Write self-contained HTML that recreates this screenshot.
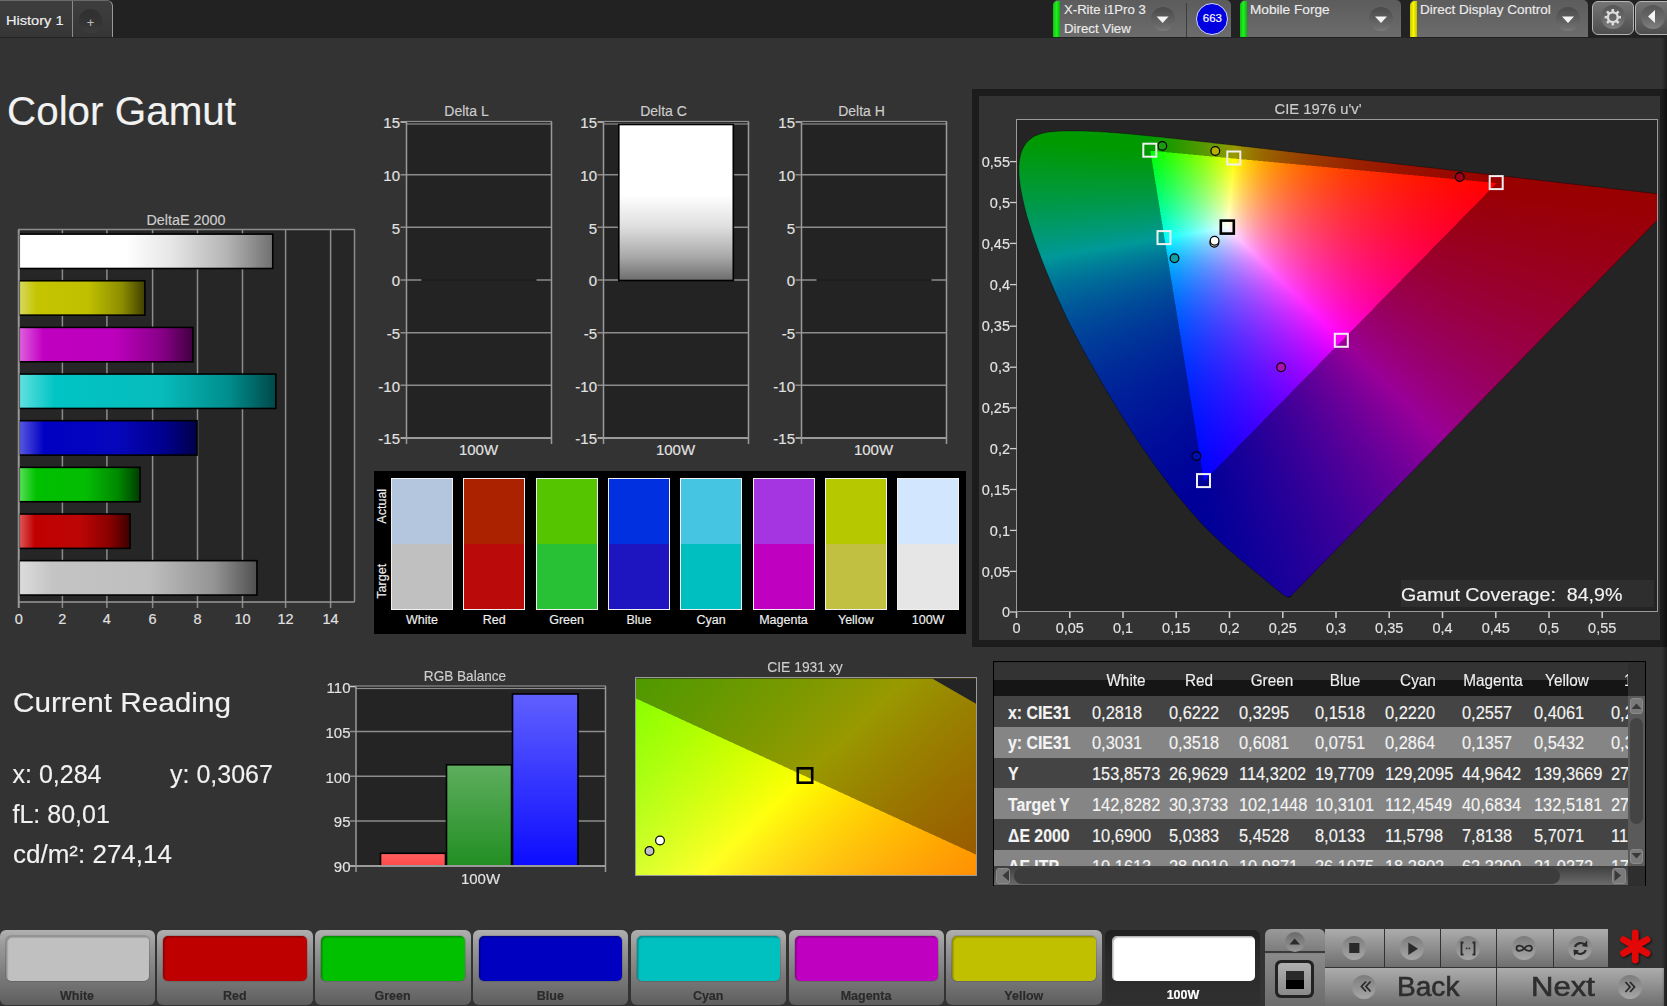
<!DOCTYPE html>
<html><head><meta charset="utf-8">
<style>
*{margin:0;padding:0;box-sizing:border-box}
html,body{width:1667px;height:1006px;overflow:hidden;background:#333333;font-family:"Liberation Sans",sans-serif;color:#ddd}
.a{position:absolute}
.t{position:absolute;white-space:nowrap;line-height:1;-webkit-text-stroke:0.15px currentColor}
svg.s{position:absolute;left:0;top:0;width:1667px;height:1006px;overflow:visible}
</style></head><body>

<div class="a" style="left:0.0px;top:0.0px;width:1667.0px;height:38.0px;background:#222"></div>
<div class="a" style="left:0.0px;top:0.0px;width:113.0px;height:37.0px;background:linear-gradient(#3e3e3e,#363636);border-top:1px solid #6a6a6a;border-right:1.5px solid #9a9a9a;border-top-right-radius:6px"></div>
<div class="a" style="left:71.5px;top:1.0px;width:1.2px;height:36.0px;background:#8a8a8a"></div>
<div class="t" style="left:6.0px;top:13.5px;font-size:13.5px;color:#f0f0f0;font-weight:normal;transform:scaleX(1.08);transform-origin:0 0;">History 1</div>
<div class="a" style="left:78.8px;top:9.3px;width:23.5px;height:23.5px;border-radius:50%;background:linear-gradient(#303030,#343434 60%,#3c3c3c)"></div>
<div class="t" style="left:-209.5px;width:600px;text-align:center;top:15.8px;font-size:13px;color:#b8b8b8;font-weight:normal;">+</div>
<div class="a" style="left:1053.0px;top:0.0px;width:178.0px;height:37.0px;background:linear-gradient(#5c5c5c,#6c6c6c);border-top-left-radius:5px;border-top-right-radius:5px"></div>
<div class="a" style="left:1053.0px;top:1.0px;width:7.0px;height:36.0px;background:linear-gradient(90deg,#10c010,#20f020 50%,#10b010);border-top-left-radius:5px"></div>
<div class="a" style="left:1185.5px;top:3.0px;width:1.5px;height:34.0px;background:#3c3c3c"></div>
<div class="t" style="left:1064.0px;top:3.0px;font-size:13px;color:#ececec;font-weight:normal;transform:scaleX(1.01);transform-origin:0 0;">X-Rite i1Pro 3</div>
<div class="t" style="left:1064.0px;top:22.0px;font-size:13px;color:#ececec;font-weight:normal;transform:scaleX(1.02);transform-origin:0 0;">Direct View</div>
<div class="a" style="left:1150.6px;top:6.6px;width:24.0px;height:24.0px;border-radius:50%;background:linear-gradient(#4a4a4a,#6a6a6a 80%,#7a7a7a)"></div><svg class="s"><polygon points="1156.6,16.6 1168.6,16.6 1162.6,23.1" fill="#f4f4f4"/></svg>
<div class="a" style="left:1196.4px;top:2.6px;width:32.0px;height:32.0px;border-radius:50%;background:#0000e0;border:1.5px solid #d8d8ff"></div>
<div class="t" style="left:912.4px;width:600px;text-align:center;top:13.2px;font-size:11.5px;color:#ffffff;font-weight:normal;">663</div>
<div class="a" style="left:1239.5px;top:0.0px;width:161.5px;height:37.0px;background:linear-gradient(#5c5c5c,#6c6c6c);border-top-left-radius:5px;border-top-right-radius:5px"></div>
<div class="a" style="left:1239.5px;top:1.0px;width:7.0px;height:36.0px;background:linear-gradient(90deg,#10c010,#20f020 50%,#10b010);border-top-left-radius:5px"></div>
<div class="t" style="left:1250.0px;top:3.0px;font-size:13px;color:#ececec;font-weight:normal;transform:scaleX(1.05);transform-origin:0 0;">Mobile Forge</div>
<div class="a" style="left:1369.0px;top:6.6px;width:24.0px;height:24.0px;border-radius:50%;background:linear-gradient(#4a4a4a,#6a6a6a 80%,#7a7a7a)"></div><svg class="s"><polygon points="1375,16.6 1387,16.6 1381,23.1" fill="#f4f4f4"/></svg>
<div class="a" style="left:1410.0px;top:0.0px;width:178.0px;height:37.0px;background:linear-gradient(#5c5c5c,#6c6c6c);border-top-left-radius:5px;border-top-right-radius:5px"></div>
<div class="a" style="left:1410.0px;top:1.0px;width:7.0px;height:36.0px;background:linear-gradient(90deg,#c8c800,#f8f800 50%,#c0c000);border-top-left-radius:5px"></div>
<div class="t" style="left:1420.0px;top:3.0px;font-size:13px;color:#ececec;font-weight:normal;transform:scaleX(1.04);transform-origin:0 0;">Direct Display Control</div>
<div class="a" style="left:1556.0px;top:6.6px;width:24.0px;height:24.0px;border-radius:50%;background:linear-gradient(#4a4a4a,#6a6a6a 80%,#7a7a7a)"></div><svg class="s"><polygon points="1562,16.6 1574,16.6 1568,23.1" fill="#f4f4f4"/></svg>
<div class="a" style="left:1592.0px;top:0.5px;width:42.0px;height:34.5px;background:linear-gradient(#747474,#4e4e4e);border:1.5px solid #b4b4b4;border-radius:6px"></div>
<div class="a" style="left:1600.8px;top:5.2px;width:24.0px;height:24.0px;border-radius:50%;background:linear-gradient(#555,#6a6a6a 60%,#808080)"></div>
<svg class="s"><rect x="1611.5" y="9.0" width="2.6" height="3.4" fill="#dcdcdc" transform="rotate(0 1612.8 17.2)"/><rect x="1611.5" y="9.0" width="2.6" height="3.4" fill="#dcdcdc" transform="rotate(45 1612.8 17.2)"/><rect x="1611.5" y="9.0" width="2.6" height="3.4" fill="#dcdcdc" transform="rotate(90 1612.8 17.2)"/><rect x="1611.5" y="9.0" width="2.6" height="3.4" fill="#dcdcdc" transform="rotate(135 1612.8 17.2)"/><rect x="1611.5" y="9.0" width="2.6" height="3.4" fill="#dcdcdc" transform="rotate(180 1612.8 17.2)"/><rect x="1611.5" y="9.0" width="2.6" height="3.4" fill="#dcdcdc" transform="rotate(225 1612.8 17.2)"/><rect x="1611.5" y="9.0" width="2.6" height="3.4" fill="#dcdcdc" transform="rotate(270 1612.8 17.2)"/><rect x="1611.5" y="9.0" width="2.6" height="3.4" fill="#dcdcdc" transform="rotate(315 1612.8 17.2)"/><circle cx="1612.8" cy="17.2" r="4.9" fill="none" stroke="#dcdcdc" stroke-width="2.3"/></svg>
<div class="a" style="left:1635.0px;top:0.5px;width:40.0px;height:34.5px;background:linear-gradient(#747474,#4e4e4e);border:1.5px solid #b4b4b4;border-radius:6px"></div>
<div class="a" style="left:1640.5px;top:5.2px;width:24.0px;height:24.0px;border-radius:50%;background:linear-gradient(#555,#6a6a6a 60%,#808080)"></div>
<svg class="s"><polygon points="1648,16.6 1655,10 1655,23" fill="#f4f4f4"/></svg>
<div class="t" style="left:6.5px;top:91.2px;font-size:40px;color:#f2f2f2;font-weight:normal;transform:scaleX(1.01);transform-origin:0 0;">Color Gamut</div>
<svg class="s"><defs><linearGradient id="de_white" x1="0" y1="0" x2="1" y2="0"><stop offset="0" stop-color="#ffffff"/><stop offset="0.42" stop-color="#ffffff"/><stop offset="0.6" stop-color="#e6e6e6"/><stop offset="0.82" stop-color="#b4b4b4"/><stop offset="1" stop-color="#707070"/></linearGradient><linearGradient id="de_yellow" x1="0" y1="0" x2="1" y2="0"><stop offset="0" stop-color="#d8d860"/><stop offset="0.14" stop-color="#c4c400"/><stop offset="0.55" stop-color="#c0c000"/><stop offset="0.82" stop-color="#8c8c00"/><stop offset="1" stop-color="#404000"/></linearGradient><linearGradient id="de_magenta" x1="0" y1="0" x2="1" y2="0"><stop offset="0" stop-color="#e060e0"/><stop offset="0.14" stop-color="#c000c0"/><stop offset="0.55" stop-color="#bc00bc"/><stop offset="0.82" stop-color="#880088"/><stop offset="1" stop-color="#400040"/></linearGradient><linearGradient id="de_cyan" x1="0" y1="0" x2="1" y2="0"><stop offset="0" stop-color="#60e0e0"/><stop offset="0.14" stop-color="#00c4c4"/><stop offset="0.55" stop-color="#08bcbc"/><stop offset="0.82" stop-color="#008c8c"/><stop offset="1" stop-color="#004848"/></linearGradient><linearGradient id="de_blue" x1="0" y1="0" x2="1" y2="0"><stop offset="0" stop-color="#5858e0"/><stop offset="0.14" stop-color="#0000c4"/><stop offset="0.55" stop-color="#0606bc"/><stop offset="0.82" stop-color="#00008c"/><stop offset="1" stop-color="#000048"/></linearGradient><linearGradient id="de_green" x1="0" y1="0" x2="1" y2="0"><stop offset="0" stop-color="#58e058"/><stop offset="0.14" stop-color="#00c000"/><stop offset="0.55" stop-color="#04bc04"/><stop offset="0.82" stop-color="#008800"/><stop offset="1" stop-color="#003c00"/></linearGradient><linearGradient id="de_red" x1="0" y1="0" x2="1" y2="0"><stop offset="0" stop-color="#e05858"/><stop offset="0.14" stop-color="#c00000"/><stop offset="0.55" stop-color="#bc0606"/><stop offset="0.82" stop-color="#880000"/><stop offset="1" stop-color="#3c0000"/></linearGradient><linearGradient id="de_gray" x1="0" y1="0" x2="1" y2="0"><stop offset="0" stop-color="#dcdcdc"/><stop offset="0.14" stop-color="#c4c4c4"/><stop offset="0.55" stop-color="#bebebe"/><stop offset="0.82" stop-color="#949494"/><stop offset="1" stop-color="#505050"/></linearGradient></defs><rect x="18.5" y="229.5" width="336.0" height="372.5" fill="#262626"/><line x1="62.4" y1="229.5" x2="62.4" y2="608" stroke="#8c8c8c" stroke-width="1.5"/><line x1="106.9" y1="229.5" x2="106.9" y2="608" stroke="#8c8c8c" stroke-width="1.5"/><line x1="152.6" y1="229.5" x2="152.6" y2="608" stroke="#8c8c8c" stroke-width="1.5"/><line x1="197.5" y1="229.5" x2="197.5" y2="608" stroke="#8c8c8c" stroke-width="1.5"/><line x1="242.5" y1="229.5" x2="242.5" y2="608" stroke="#8c8c8c" stroke-width="1.5"/><line x1="285.6" y1="229.5" x2="285.6" y2="608" stroke="#8c8c8c" stroke-width="1.5"/><line x1="330.6" y1="229.5" x2="330.6" y2="608" stroke="#8c8c8c" stroke-width="1.5"/><line x1="354.5" y1="229.5" x2="354.5" y2="602" stroke="#8c8c8c" stroke-width="1.5"/><line x1="18.5" y1="229.5" x2="354.5" y2="229.5" stroke="#8c8c8c" stroke-width="1.5"/><line x1="18.5" y1="602" x2="354.5" y2="602" stroke="#9a9a9a" stroke-width="1.5"/><line x1="18.5" y1="229.5" x2="18.5" y2="608" stroke="#9a9a9a" stroke-width="1.5"/><rect x="19.25" y="234.10000000000002" width="253.5" height="34.4" fill="url(#de_white)" stroke="#000" stroke-width="1.6"/><rect x="19.25" y="280.75" width="125.6" height="34.4" fill="url(#de_yellow)" stroke="#000" stroke-width="1.6"/><rect x="19.25" y="327.40000000000003" width="173.7" height="34.4" fill="url(#de_magenta)" stroke="#000" stroke-width="1.6"/><rect x="19.25" y="374.05" width="256.6" height="34.4" fill="url(#de_cyan)" stroke="#000" stroke-width="1.6"/><rect x="19.25" y="420.7" width="177.8" height="34.4" fill="url(#de_blue)" stroke="#000" stroke-width="1.6"/><rect x="19.25" y="467.35" width="120.80000000000001" height="34.4" fill="url(#de_green)" stroke="#000" stroke-width="1.6"/><rect x="19.25" y="514.0" width="110.80000000000001" height="34.4" fill="url(#de_red)" stroke="#000" stroke-width="1.6"/><rect x="19.25" y="560.65" width="237.7" height="34.4" fill="url(#de_gray)" stroke="#000" stroke-width="1.6"/><line x1="18.9" y1="229.5" x2="18.9" y2="608" stroke="#9a9a9a" stroke-width="1.5"/></svg>
<div class="t" style="left:-114.0px;width:600px;text-align:center;top:212.9px;font-size:14px;color:#cdcdcd;font-weight:normal;transform:scaleX(1.025);">DeltaE 2000</div>
<div class="t" style="left:-281.1px;width:600px;text-align:center;top:612.2px;font-size:14.5px;color:#e2e2e2;font-weight:normal;">0</div>
<div class="t" style="left:-237.6px;width:600px;text-align:center;top:612.2px;font-size:14.5px;color:#e2e2e2;font-weight:normal;">2</div>
<div class="t" style="left:-193.1px;width:600px;text-align:center;top:612.2px;font-size:14.5px;color:#e2e2e2;font-weight:normal;">4</div>
<div class="t" style="left:-147.4px;width:600px;text-align:center;top:612.2px;font-size:14.5px;color:#e2e2e2;font-weight:normal;">6</div>
<div class="t" style="left:-102.5px;width:600px;text-align:center;top:612.2px;font-size:14.5px;color:#e2e2e2;font-weight:normal;">8</div>
<div class="t" style="left:-57.5px;width:600px;text-align:center;top:612.2px;font-size:14.5px;color:#e2e2e2;font-weight:normal;">10</div>
<div class="t" style="left:-14.4px;width:600px;text-align:center;top:612.2px;font-size:14.5px;color:#e2e2e2;font-weight:normal;">12</div>
<div class="t" style="left:30.6px;width:600px;text-align:center;top:612.2px;font-size:14.5px;color:#e2e2e2;font-weight:normal;">14</div>
<div class="t" style="left:166.5px;width:600px;text-align:center;top:103.9px;font-size:14px;color:#cdcdcd;font-weight:normal;">Delta L</div>
<div class="t" style="left:-200.0px;width:600px;text-align:right;top:115.2px;font-size:15px;color:#e2e2e2;font-weight:normal;">15</div>
<div class="t" style="left:-200.0px;width:600px;text-align:right;top:167.9px;font-size:15px;color:#e2e2e2;font-weight:normal;">10</div>
<div class="t" style="left:-200.0px;width:600px;text-align:right;top:220.6px;font-size:15px;color:#e2e2e2;font-weight:normal;">5</div>
<div class="t" style="left:-200.0px;width:600px;text-align:right;top:273.2px;font-size:15px;color:#e2e2e2;font-weight:normal;">0</div>
<div class="t" style="left:-200.0px;width:600px;text-align:right;top:325.9px;font-size:15px;color:#e2e2e2;font-weight:normal;">-5</div>
<div class="t" style="left:-200.0px;width:600px;text-align:right;top:378.6px;font-size:15px;color:#e2e2e2;font-weight:normal;">-10</div>
<div class="t" style="left:-200.0px;width:600px;text-align:right;top:431.3px;font-size:15px;color:#e2e2e2;font-weight:normal;">-15</div>
<div class="t" style="left:178.5px;width:600px;text-align:center;top:441.8px;font-size:15px;color:#e2e2e2;font-weight:normal;">100W</div>
<div class="t" style="left:363.5px;width:600px;text-align:center;top:103.9px;font-size:14px;color:#cdcdcd;font-weight:normal;">Delta C</div>
<div class="t" style="left:-3.0px;width:600px;text-align:right;top:115.2px;font-size:15px;color:#e2e2e2;font-weight:normal;">15</div>
<div class="t" style="left:-3.0px;width:600px;text-align:right;top:167.9px;font-size:15px;color:#e2e2e2;font-weight:normal;">10</div>
<div class="t" style="left:-3.0px;width:600px;text-align:right;top:220.6px;font-size:15px;color:#e2e2e2;font-weight:normal;">5</div>
<div class="t" style="left:-3.0px;width:600px;text-align:right;top:273.2px;font-size:15px;color:#e2e2e2;font-weight:normal;">0</div>
<div class="t" style="left:-3.0px;width:600px;text-align:right;top:325.9px;font-size:15px;color:#e2e2e2;font-weight:normal;">-5</div>
<div class="t" style="left:-3.0px;width:600px;text-align:right;top:378.6px;font-size:15px;color:#e2e2e2;font-weight:normal;">-10</div>
<div class="t" style="left:-3.0px;width:600px;text-align:right;top:431.3px;font-size:15px;color:#e2e2e2;font-weight:normal;">-15</div>
<div class="t" style="left:375.5px;width:600px;text-align:center;top:441.8px;font-size:15px;color:#e2e2e2;font-weight:normal;">100W</div>
<div class="t" style="left:561.5px;width:600px;text-align:center;top:103.9px;font-size:14px;color:#cdcdcd;font-weight:normal;">Delta H</div>
<div class="t" style="left:195.0px;width:600px;text-align:right;top:115.2px;font-size:15px;color:#e2e2e2;font-weight:normal;">15</div>
<div class="t" style="left:195.0px;width:600px;text-align:right;top:167.9px;font-size:15px;color:#e2e2e2;font-weight:normal;">10</div>
<div class="t" style="left:195.0px;width:600px;text-align:right;top:220.6px;font-size:15px;color:#e2e2e2;font-weight:normal;">5</div>
<div class="t" style="left:195.0px;width:600px;text-align:right;top:273.2px;font-size:15px;color:#e2e2e2;font-weight:normal;">0</div>
<div class="t" style="left:195.0px;width:600px;text-align:right;top:325.9px;font-size:15px;color:#e2e2e2;font-weight:normal;">-5</div>
<div class="t" style="left:195.0px;width:600px;text-align:right;top:378.6px;font-size:15px;color:#e2e2e2;font-weight:normal;">-10</div>
<div class="t" style="left:195.0px;width:600px;text-align:right;top:431.3px;font-size:15px;color:#e2e2e2;font-weight:normal;">-15</div>
<div class="t" style="left:573.5px;width:600px;text-align:center;top:441.8px;font-size:15px;color:#e2e2e2;font-weight:normal;">100W</div>
<svg class="s"><defs><linearGradient id="dc" x1="0" y1="0" x2="0" y2="1"><stop offset="0" stop-color="#fff"/><stop offset="0.45" stop-color="#fff"/><stop offset="0.65" stop-color="#e0e0e0"/><stop offset="0.85" stop-color="#a8a8a8"/><stop offset="1" stop-color="#6c6c6c"/></linearGradient></defs><rect x="406.5" y="121.98999999999998" width="145" height="316.02" fill="#232323"/><line x1="400.5" y1="385.34000000000003" x2="551.5" y2="385.34000000000003" stroke="#8c8c8c" stroke-width="1.5"/><line x1="400.5" y1="332.67" x2="551.5" y2="332.67" stroke="#8c8c8c" stroke-width="1.5"/><line x1="400.5" y1="280.0" x2="551.5" y2="280.0" stroke="#8c8c8c" stroke-width="1.5"/><line x1="400.5" y1="227.32999999999998" x2="551.5" y2="227.32999999999998" stroke="#8c8c8c" stroke-width="1.5"/><line x1="400.5" y1="174.66" x2="551.5" y2="174.66" stroke="#8c8c8c" stroke-width="1.5"/><line x1="400.5" y1="121.98999999999998" x2="406.5" y2="121.98999999999998" stroke="#cfcfcf" stroke-width="1.5"/><line x1="400.5" y1="438.01" x2="406.5" y2="438.01" stroke="#cfcfcf" stroke-width="1.5"/><rect x="406.5" y="121.48999999999998" width="145" height="2.5" fill="none" stroke="#8c8c8c" stroke-width="1.2"/><line x1="406.5" y1="121.98999999999998" x2="406.5" y2="444.01" stroke="#9a9a9a" stroke-width="1.5"/><line x1="551.5" y1="121.98999999999998" x2="551.5" y2="444.01" stroke="#9a9a9a" stroke-width="1.5"/><line x1="406.5" y1="438.01" x2="551.5" y2="438.01" stroke="#9a9a9a" stroke-width="2"/><rect x="421.5" y="279.0" width="115" height="2.2" fill="#1e1e1e"/><rect x="603.5" y="121.98999999999998" width="145" height="316.02" fill="#232323"/><line x1="597.5" y1="385.34000000000003" x2="748.5" y2="385.34000000000003" stroke="#8c8c8c" stroke-width="1.5"/><line x1="597.5" y1="332.67" x2="748.5" y2="332.67" stroke="#8c8c8c" stroke-width="1.5"/><line x1="597.5" y1="280.0" x2="748.5" y2="280.0" stroke="#8c8c8c" stroke-width="1.5"/><line x1="597.5" y1="227.32999999999998" x2="748.5" y2="227.32999999999998" stroke="#8c8c8c" stroke-width="1.5"/><line x1="597.5" y1="174.66" x2="748.5" y2="174.66" stroke="#8c8c8c" stroke-width="1.5"/><line x1="597.5" y1="121.98999999999998" x2="603.5" y2="121.98999999999998" stroke="#cfcfcf" stroke-width="1.5"/><line x1="597.5" y1="438.01" x2="603.5" y2="438.01" stroke="#cfcfcf" stroke-width="1.5"/><rect x="603.5" y="121.48999999999998" width="145" height="2.5" fill="none" stroke="#8c8c8c" stroke-width="1.2"/><line x1="603.5" y1="121.98999999999998" x2="603.5" y2="444.01" stroke="#9a9a9a" stroke-width="1.5"/><line x1="748.5" y1="121.98999999999998" x2="748.5" y2="444.01" stroke="#9a9a9a" stroke-width="1.5"/><line x1="603.5" y1="438.01" x2="748.5" y2="438.01" stroke="#9a9a9a" stroke-width="2"/><rect x="618.8" y="124.5" width="114.5" height="156" fill="url(#dc)" stroke="#000" stroke-width="1.6"/><rect x="801.5" y="121.98999999999998" width="145" height="316.02" fill="#232323"/><line x1="795.5" y1="385.34000000000003" x2="946.5" y2="385.34000000000003" stroke="#8c8c8c" stroke-width="1.5"/><line x1="795.5" y1="332.67" x2="946.5" y2="332.67" stroke="#8c8c8c" stroke-width="1.5"/><line x1="795.5" y1="280.0" x2="946.5" y2="280.0" stroke="#8c8c8c" stroke-width="1.5"/><line x1="795.5" y1="227.32999999999998" x2="946.5" y2="227.32999999999998" stroke="#8c8c8c" stroke-width="1.5"/><line x1="795.5" y1="174.66" x2="946.5" y2="174.66" stroke="#8c8c8c" stroke-width="1.5"/><line x1="795.5" y1="121.98999999999998" x2="801.5" y2="121.98999999999998" stroke="#cfcfcf" stroke-width="1.5"/><line x1="795.5" y1="438.01" x2="801.5" y2="438.01" stroke="#cfcfcf" stroke-width="1.5"/><rect x="801.5" y="121.48999999999998" width="145" height="2.5" fill="none" stroke="#8c8c8c" stroke-width="1.2"/><line x1="801.5" y1="121.98999999999998" x2="801.5" y2="444.01" stroke="#9a9a9a" stroke-width="1.5"/><line x1="946.5" y1="121.98999999999998" x2="946.5" y2="444.01" stroke="#9a9a9a" stroke-width="1.5"/><line x1="801.5" y1="438.01" x2="946.5" y2="438.01" stroke="#9a9a9a" stroke-width="2"/><rect x="816.5" y="279.0" width="115" height="2.2" fill="#1e1e1e"/></svg>
<div class="a" style="left:374.0px;top:470.5px;width:592.0px;height:163.0px;background:#000"></div>
<div class="a" style="left:391.0px;top:478.0px;width:62.0px;height:132.0px;border:1.5px solid #f0f0f0;background:linear-gradient(#b3c6dd 0,#b3c6dd 50%,#c0c0c0 50%,#c0c0c0 100%)"></div>
<div class="t" style="left:122.0px;width:600px;text-align:center;top:613.9px;font-size:12.5px;color:#f0f0f0;font-weight:normal;">White</div>
<div class="a" style="left:463.3px;top:478.0px;width:62.0px;height:132.0px;border:1.5px solid #f0f0f0;background:linear-gradient(#aa2200 0,#aa2200 50%,#bb0a0a 50%,#bb0a0a 100%)"></div>
<div class="t" style="left:194.3px;width:600px;text-align:center;top:613.9px;font-size:12.5px;color:#f0f0f0;font-weight:normal;">Red</div>
<div class="a" style="left:535.6px;top:478.0px;width:62.0px;height:132.0px;border:1.5px solid #f0f0f0;background:linear-gradient(#55c500 0,#55c500 50%,#28c035 50%,#28c035 100%)"></div>
<div class="t" style="left:266.6px;width:600px;text-align:center;top:613.9px;font-size:12.5px;color:#f0f0f0;font-weight:normal;">Green</div>
<div class="a" style="left:607.9px;top:478.0px;width:62.0px;height:132.0px;border:1.5px solid #f0f0f0;background:linear-gradient(#0030e0 0,#0030e0 50%,#1e14c0 50%,#1e14c0 100%)"></div>
<div class="t" style="left:338.9px;width:600px;text-align:center;top:613.9px;font-size:12.5px;color:#f0f0f0;font-weight:normal;">Blue</div>
<div class="a" style="left:680.2px;top:478.0px;width:62.0px;height:132.0px;border:1.5px solid #f0f0f0;background:linear-gradient(#45c5e2 0,#45c5e2 50%,#00bfc0 50%,#00bfc0 100%)"></div>
<div class="t" style="left:411.2px;width:600px;text-align:center;top:613.9px;font-size:12.5px;color:#f0f0f0;font-weight:normal;">Cyan</div>
<div class="a" style="left:752.5px;top:478.0px;width:62.0px;height:132.0px;border:1.5px solid #f0f0f0;background:linear-gradient(#a535e0 0,#a535e0 50%,#bf00c0 50%,#bf00c0 100%)"></div>
<div class="t" style="left:483.5px;width:600px;text-align:center;top:613.9px;font-size:12.5px;color:#f0f0f0;font-weight:normal;">Magenta</div>
<div class="a" style="left:824.8px;top:478.0px;width:62.0px;height:132.0px;border:1.5px solid #f0f0f0;background:linear-gradient(#b5c800 0,#b5c800 50%,#c2c040 50%,#c2c040 100%)"></div>
<div class="t" style="left:555.8px;width:600px;text-align:center;top:613.9px;font-size:12.5px;color:#f0f0f0;font-weight:normal;">Yellow</div>
<div class="a" style="left:897.1px;top:478.0px;width:62.0px;height:132.0px;border:1.5px solid #f0f0f0;background:linear-gradient(#d2e6fd 0,#d2e6fd 50%,#e6e6e6 50%,#e6e6e6 100%)"></div>
<div class="t" style="left:628.1px;width:600px;text-align:center;top:613.9px;font-size:12.5px;color:#f0f0f0;font-weight:normal;">100W</div>
<div class="t" style="left:352px;top:500.0px;width:60px;text-align:center;font-size:12.5px;color:#f0f0f0;transform:rotate(-90deg)">Actual</div>
<div class="t" style="left:352px;top:575.2px;width:60px;text-align:center;font-size:12.5px;color:#f0f0f0;transform:rotate(-90deg)">Target</div>
<div class="a" style="left:972.3px;top:89.0px;width:700.0px;height:558.0px;background:#1c1c1c"></div>
<div class="a" style="left:979.0px;top:96.0px;width:681.0px;height:544.0px;background:#333"></div>
<div class="a" style="left:1016.0px;top:119.0px;width:642.0px;height:492.8px;background:#242424"></div>
<svg class="s"><defs><clipPath id="cp76"><polygon points="1290.0,596.0 1288.8,596.5 1285.1,595.7 1278.6,591.0 1266.5,580.9 1246.7,564.6 1216.5,538.4 1196.6,518.1 1170.1,486.2 1138.9,442.6 1105.0,388.4 1072.3,329.7 1046.8,273.4 1029.5,225.9 1020.6,190.6 1018.4,166.0 1021.8,149.1 1030.0,138.4 1041.5,132.9 1055.2,130.9 1070.1,130.4 1085.3,130.6 1101.2,131.3 1118.2,132.6 1136.8,134.2 1157.1,136.3 1179.7,138.7 1204.7,141.5 1232.4,144.6 1262.7,148.1 1295.9,151.9 1331.7,156.0 1369.5,160.3 1408.3,164.8 1446.0,169.1 1482.7,173.3 1515.9,177.1 1545.2,180.5 1570.2,183.4 1591.1,185.8 1608.7,187.8 1624.0,189.5 1637.0,191.0 1655.5,193.1 1679.9,196.0"/></clipPath><clipPath id="cb76"><rect x="1017.5" y="120.5" width="639" height="491"/></clipPath><linearGradient id="fa76" gradientUnits="userSpaceOnUse" x1="0" y1="130" x2="0" y2="598"><stop offset="0" stop-color="#009a10"/><stop offset="0.33" stop-color="#009090"/><stop offset="0.7" stop-color="#0018a0"/><stop offset="1" stop-color="#0800a0"/></linearGradient><linearGradient id="fb76" gradientUnits="userSpaceOnUse" x1="1290" y1="598" x2="1657" y2="192"><stop offset="0" stop-color="#1800a0"/><stop offset="0.5" stop-color="#900090"/><stop offset="1" stop-color="#a00010"/></linearGradient><linearGradient id="fc76" gradientUnits="userSpaceOnUse" x1="1150" y1="0" x2="1497" y2="0"><stop offset="0" stop-color="#309000"/><stop offset="0.3" stop-color="#8a8a00"/><stop offset="1" stop-color="#a01000"/></linearGradient><linearGradient id="ta76" gradientUnits="userSpaceOnUse" x1="1150" y1="0" x2="1497" y2="0"><stop offset="0" stop-color="#20ff20"/><stop offset="0.25" stop-color="#ffff20"/><stop offset="1" stop-color="#ff0030"/></linearGradient><linearGradient id="tb76" gradientUnits="userSpaceOnUse" x1="0" y1="200" x2="0" y2="482"><stop offset="0" stop-color="#2020ff" stop-opacity="0"/><stop offset="1" stop-color="#1010ff" stop-opacity="1"/></linearGradient><radialGradient id="tw76" gradientUnits="userSpaceOnUse" cx="1227.3" cy="227.1" r="110"><stop offset="0" stop-color="#fff"/><stop offset="1" stop-color="#fff" stop-opacity="0"/></radialGradient></defs><g clip-path="url(#cb76)"><g clip-path="url(#cp76)"><rect x="1000" y="110" width="700" height="510" fill="url(#fb76)"/><polygon points="1000.0,110.0 1096.2,-180.1 1310.8,1141.3 1000.0,620.0" fill="url(#fa76)"/><polygon points="457.1,85.5 1000.0,110.0 1700.0,110.0 1935.3,-264.5 1496.2,182.6 1149.8,150.2" fill="url(#fc76)"/><polygon points="1496.2,182.6 1149.8,150.2 1203.5,480.6" fill="url(#ta76)"/><polygon points="1496.2,182.6 1149.8,150.2 1203.5,480.6" fill="url(#tb76)"/><polygon points="1496.2,182.6 1149.8,150.2 1203.5,480.6" fill="url(#tw76)"/></g></g></svg>
<canvas id="cie76" class="a" width="640" height="491" style="left:1017.5px;top:120.5px"></canvas>
<div class="a" style="left:1016.0px;top:119.0px;width:642.0px;height:492.8px;border:1.5px solid #9a9a9a"></div>
<div class="t" style="left:1018.0px;width:600px;text-align:center;top:102.1px;font-size:14px;color:#cdcdcd;font-weight:normal;transform:scaleX(1.055);">CIE 1976 u'v'</div>
<svg class="s"><line x1="1010" y1="612.0" x2="1016.5" y2="612.0" stroke="#cfcfcf" stroke-width="1.3"/><line x1="1010" y1="571.4" x2="1016.5" y2="571.4" stroke="#cfcfcf" stroke-width="1.3"/><line x1="1010" y1="530.4" x2="1016.5" y2="530.4" stroke="#cfcfcf" stroke-width="1.3"/><line x1="1010" y1="489.5" x2="1016.5" y2="489.5" stroke="#cfcfcf" stroke-width="1.3"/><line x1="1010" y1="448.6" x2="1016.5" y2="448.6" stroke="#cfcfcf" stroke-width="1.3"/><line x1="1010" y1="407.9" x2="1016.5" y2="407.9" stroke="#cfcfcf" stroke-width="1.3"/><line x1="1010" y1="367.2" x2="1016.5" y2="367.2" stroke="#cfcfcf" stroke-width="1.3"/><line x1="1010" y1="326.2" x2="1016.5" y2="326.2" stroke="#cfcfcf" stroke-width="1.3"/><line x1="1010" y1="284.6" x2="1016.5" y2="284.6" stroke="#cfcfcf" stroke-width="1.3"/><line x1="1010" y1="243.4" x2="1016.5" y2="243.4" stroke="#cfcfcf" stroke-width="1.3"/><line x1="1010" y1="202.5" x2="1016.5" y2="202.5" stroke="#cfcfcf" stroke-width="1.3"/><line x1="1010" y1="161.6" x2="1016.5" y2="161.6" stroke="#cfcfcf" stroke-width="1.3"/><line x1="1016.5" y1="612" x2="1016.5" y2="618" stroke="#cfcfcf" stroke-width="1.5"/><line x1="1069.8" y1="612" x2="1069.8" y2="618" stroke="#cfcfcf" stroke-width="1.5"/><line x1="1123.0" y1="612" x2="1123.0" y2="618" stroke="#cfcfcf" stroke-width="1.5"/><line x1="1176.2" y1="612" x2="1176.2" y2="618" stroke="#cfcfcf" stroke-width="1.5"/><line x1="1229.5" y1="612" x2="1229.5" y2="618" stroke="#cfcfcf" stroke-width="1.5"/><line x1="1282.8" y1="612" x2="1282.8" y2="618" stroke="#cfcfcf" stroke-width="1.5"/><line x1="1336.0" y1="612" x2="1336.0" y2="618" stroke="#cfcfcf" stroke-width="1.5"/><line x1="1389.2" y1="612" x2="1389.2" y2="618" stroke="#cfcfcf" stroke-width="1.5"/><line x1="1442.5" y1="612" x2="1442.5" y2="618" stroke="#cfcfcf" stroke-width="1.5"/><line x1="1495.8" y1="612" x2="1495.8" y2="618" stroke="#cfcfcf" stroke-width="1.5"/><line x1="1549.0" y1="612" x2="1549.0" y2="618" stroke="#cfcfcf" stroke-width="1.5"/><line x1="1602.2" y1="612" x2="1602.2" y2="618" stroke="#cfcfcf" stroke-width="1.5"/></svg>
<div class="t" style="left:410.0px;width:600px;text-align:right;top:605.2px;font-size:14.5px;color:#e2e2e2;font-weight:normal;">0</div>
<div class="t" style="left:716.5px;width:600px;text-align:center;top:620.7px;font-size:14.5px;color:#e2e2e2;font-weight:normal;">0</div>
<div class="t" style="left:410.0px;width:600px;text-align:right;top:564.6px;font-size:14.5px;color:#e2e2e2;font-weight:normal;">0,05</div>
<div class="t" style="left:769.8px;width:600px;text-align:center;top:620.7px;font-size:14.5px;color:#e2e2e2;font-weight:normal;">0,05</div>
<div class="t" style="left:410.0px;width:600px;text-align:right;top:523.6px;font-size:14.5px;color:#e2e2e2;font-weight:normal;">0,1</div>
<div class="t" style="left:823.0px;width:600px;text-align:center;top:620.7px;font-size:14.5px;color:#e2e2e2;font-weight:normal;">0,1</div>
<div class="t" style="left:410.0px;width:600px;text-align:right;top:482.7px;font-size:14.5px;color:#e2e2e2;font-weight:normal;">0,15</div>
<div class="t" style="left:876.2px;width:600px;text-align:center;top:620.7px;font-size:14.5px;color:#e2e2e2;font-weight:normal;">0,15</div>
<div class="t" style="left:410.0px;width:600px;text-align:right;top:441.8px;font-size:14.5px;color:#e2e2e2;font-weight:normal;">0,2</div>
<div class="t" style="left:929.5px;width:600px;text-align:center;top:620.7px;font-size:14.5px;color:#e2e2e2;font-weight:normal;">0,2</div>
<div class="t" style="left:410.0px;width:600px;text-align:right;top:401.1px;font-size:14.5px;color:#e2e2e2;font-weight:normal;">0,25</div>
<div class="t" style="left:982.8px;width:600px;text-align:center;top:620.7px;font-size:14.5px;color:#e2e2e2;font-weight:normal;">0,25</div>
<div class="t" style="left:410.0px;width:600px;text-align:right;top:360.4px;font-size:14.5px;color:#e2e2e2;font-weight:normal;">0,3</div>
<div class="t" style="left:1036.0px;width:600px;text-align:center;top:620.7px;font-size:14.5px;color:#e2e2e2;font-weight:normal;">0,3</div>
<div class="t" style="left:410.0px;width:600px;text-align:right;top:319.4px;font-size:14.5px;color:#e2e2e2;font-weight:normal;">0,35</div>
<div class="t" style="left:1089.2px;width:600px;text-align:center;top:620.7px;font-size:14.5px;color:#e2e2e2;font-weight:normal;">0,35</div>
<div class="t" style="left:410.0px;width:600px;text-align:right;top:277.8px;font-size:14.5px;color:#e2e2e2;font-weight:normal;">0,4</div>
<div class="t" style="left:1142.5px;width:600px;text-align:center;top:620.7px;font-size:14.5px;color:#e2e2e2;font-weight:normal;">0,4</div>
<div class="t" style="left:410.0px;width:600px;text-align:right;top:236.6px;font-size:14.5px;color:#e2e2e2;font-weight:normal;">0,45</div>
<div class="t" style="left:1195.8px;width:600px;text-align:center;top:620.7px;font-size:14.5px;color:#e2e2e2;font-weight:normal;">0,45</div>
<div class="t" style="left:410.0px;width:600px;text-align:right;top:195.7px;font-size:14.5px;color:#e2e2e2;font-weight:normal;">0,5</div>
<div class="t" style="left:1249.0px;width:600px;text-align:center;top:620.7px;font-size:14.5px;color:#e2e2e2;font-weight:normal;">0,5</div>
<div class="t" style="left:410.0px;width:600px;text-align:right;top:154.8px;font-size:14.5px;color:#e2e2e2;font-weight:normal;">0,55</div>
<div class="t" style="left:1302.2px;width:600px;text-align:center;top:620.7px;font-size:14.5px;color:#e2e2e2;font-weight:normal;">0,55</div>
<div class="a" style="left:1401.0px;top:579.5px;width:252.5px;height:27.0px;background:#2e2e2e"></div>
<div class="t" style="left:1401.0px;top:585.7px;font-size:18px;color:#f2f2f2;font-weight:normal;transform:scaleX(1.09);transform-origin:0 0;">Gamut Coverage:&nbsp;&nbsp;84,9%</div>
<svg class="s"><circle cx="1459.7" cy="177.0" r="4.35" fill="#a00018" stroke="#000" stroke-width="1.25"/><circle cx="1162.3" cy="145.9" r="4.35" fill="#1a9a10" stroke="#000" stroke-width="1.25"/><circle cx="1196.4" cy="456.1" r="4.35" fill="#0010b0" stroke="#000" stroke-width="1.25"/><circle cx="1174.5" cy="258.3" r="4.35" fill="#10a0a0" stroke="#000" stroke-width="1.25"/><circle cx="1281.1" cy="367.3" r="4.35" fill="#b010b0" stroke="#000" stroke-width="1.25"/><circle cx="1215.3" cy="151.0" r="4.35" fill="#b8b000" stroke="#000" stroke-width="1.25"/><circle cx="1214.3" cy="242.8" r="4.35" fill="#c8c8c8" stroke="#000" stroke-width="1.25"/><circle cx="1214.6" cy="240.8" r="4.35" fill="#ffffff" stroke="#000" stroke-width="1.25"/><rect x="1489.7" y="176.1" width="13" height="13" fill="none" stroke="#f0f0f0" stroke-width="2"/><rect x="1143.3" y="143.7" width="13" height="13" fill="none" stroke="#f0f0f0" stroke-width="2"/><rect x="1197.0" y="474.1" width="13" height="13" fill="none" stroke="#f0f0f0" stroke-width="2"/><rect x="1157.5" y="231.1" width="13" height="13" fill="none" stroke="#f0f0f0" stroke-width="2"/><rect x="1334.8" y="333.8" width="13" height="13" fill="none" stroke="#f0f0f0" stroke-width="2"/><rect x="1227.3" y="151.5" width="13" height="13" fill="none" stroke="#f0f0f0" stroke-width="2"/><rect x="1220.8" y="220.6" width="13" height="13" fill="none" stroke="#000" stroke-width="2.6"/></svg>
<div class="t" style="left:12.5px;top:690.0px;font-size:27px;color:#f2f2f2;font-weight:normal;transform:scaleX(1.1);transform-origin:0 0;">Current Reading</div>
<div class="t" style="left:12.5px;top:761.8px;font-size:25px;color:#f2f2f2;font-weight:normal;">x: 0,284</div>
<div class="t" style="left:170.0px;top:761.8px;font-size:25px;color:#f2f2f2;font-weight:normal;">y: 0,3067</div>
<div class="t" style="left:12.5px;top:801.8px;font-size:25px;color:#f2f2f2;font-weight:normal;">fL: 80,01</div>
<div class="t" style="left:12.5px;top:842.2px;font-size:25px;color:#f2f2f2;font-weight:normal;transform:scaleX(1.04);transform-origin:0 0;">cd/m²: 274,14</div>
<svg class="s"><defs><linearGradient id="rg_r" x1="0" y1="0" x2="0" y2="1"><stop offset="0" stop-color="#ff6060"/><stop offset="1" stop-color="#ff4848"/></linearGradient><linearGradient id="rg_g" x1="0" y1="0" x2="0" y2="1"><stop offset="0" stop-color="#5eae5e"/><stop offset="1" stop-color="#228e22"/></linearGradient><linearGradient id="rg_b" x1="0" y1="0" x2="0" y2="1"><stop offset="0" stop-color="#6060ff"/><stop offset="1" stop-color="#0c0cff"/></linearGradient></defs><rect x="356" y="686.5" width="249.5" height="179.5" fill="#242424"/><line x1="350" y1="731.4" x2="605.5" y2="731.4" stroke="#8c8c8c" stroke-width="1.5"/><line x1="350" y1="776.2" x2="605.5" y2="776.2" stroke="#8c8c8c" stroke-width="1.5"/><line x1="350" y1="821.1" x2="605.5" y2="821.1" stroke="#8c8c8c" stroke-width="1.5"/><line x1="350" y1="686.5" x2="356" y2="686.5" stroke="#cfcfcf" stroke-width="1.5"/><line x1="350" y1="866" x2="356" y2="866" stroke="#cfcfcf" stroke-width="1.5"/><rect x="356" y="686.0" width="249.5" height="2.5" fill="none" stroke="#8c8c8c" stroke-width="1.2"/><line x1="356" y1="686.5" x2="356" y2="872" stroke="#9a9a9a" stroke-width="1.5"/><line x1="605.5" y1="686.5" x2="605.5" y2="872" stroke="#9a9a9a" stroke-width="1.5"/><rect x="380.5" y="853.3" width="65" height="12.700000000000045" fill="url(#rg_r)" stroke="#000" stroke-width="1.6"/><rect x="446.5" y="764.8" width="65" height="101.20000000000005" fill="url(#rg_g)" stroke="#000" stroke-width="1.6"/><rect x="512.5" y="694" width="65.5" height="172" fill="url(#rg_b)" stroke="#000" stroke-width="1.6"/><line x1="356" y1="866" x2="605.5" y2="866" stroke="#9a9a9a" stroke-width="2"/></svg>
<div class="t" style="left:165.0px;width:600px;text-align:center;top:669.1px;font-size:14px;color:#cdcdcd;font-weight:normal;transform:scaleX(0.97);">RGB Balance</div>
<div class="t" style="left:-249.5px;width:600px;text-align:right;top:679.8px;font-size:15px;color:#e2e2e2;font-weight:normal;">110</div>
<div class="t" style="left:-249.5px;width:600px;text-align:right;top:724.6px;font-size:15px;color:#e2e2e2;font-weight:normal;">105</div>
<div class="t" style="left:-249.5px;width:600px;text-align:right;top:769.5px;font-size:15px;color:#e2e2e2;font-weight:normal;">100</div>
<div class="t" style="left:-249.5px;width:600px;text-align:right;top:814.4px;font-size:15px;color:#e2e2e2;font-weight:normal;">95</div>
<div class="t" style="left:-249.5px;width:600px;text-align:right;top:859.2px;font-size:15px;color:#e2e2e2;font-weight:normal;">90</div>
<div class="t" style="left:180.5px;width:600px;text-align:center;top:870.8px;font-size:15px;color:#e2e2e2;font-weight:normal;">100W</div>
<div class="a" style="left:634.5px;top:677.0px;width:342.3px;height:199.0px;background:#242424"></div>
<svg class="s"><defs><linearGradient id="fl31a" gradientUnits="userSpaceOnUse" x1="636" y1="875" x2="976" y2="700"><stop offset="0" stop-color="#c0ff20"/><stop offset="0.5" stop-color="#ffff00"/><stop offset="1" stop-color="#ff9000"/></linearGradient><linearGradient id="fl31b" gradientUnits="userSpaceOnUse" x1="636" y1="678" x2="976" y2="860"><stop offset="0" stop-color="#4a9000"/><stop offset="0.5" stop-color="#909800"/><stop offset="1" stop-color="#986000"/></linearGradient></defs><polygon points="636,678.5 976,678.5 976,854.6 636,697.7" fill="url(#fl31b)"/><polygon points="636,697.7 976,854.6 976,874.5 636,874.5" fill="url(#fl31a)"/><polygon points="932.6,678.5 976,678.5 976,702.5" fill="#242424"/></svg>
<canvas id="cie31" class="a" width="340" height="196" style="left:636px;top:678.5px"></canvas>
<div class="a" style="left:634.5px;top:677.0px;width:342.3px;height:199.0px;border:1.5px solid #9a9a9a"></div>
<div class="t" style="left:505.0px;width:600px;text-align:center;top:659.6px;font-size:14px;color:#cdcdcd;font-weight:normal;transform:scaleX(0.99);">CIE 1931 xy</div>
<svg class="s"><rect x="797.8" y="768.3" width="14.4" height="14.4" fill="none" stroke="#000" stroke-width="2.6"/><circle cx="660" cy="840.5" r="4.4" fill="#fff" stroke="#000" stroke-width="1.2"/><circle cx="649.5" cy="851" r="4.4" fill="#c0c0c8" stroke="#000" stroke-width="1.2"/></svg>
<div class="a" style="left:993.0px;top:661.0px;width:653.0px;height:224.5px;background:#2e2e2e;border:1px solid #000;border-bottom:none"></div>
<div class="a" style="left:994.0px;top:662.5px;width:634.0px;height:17.0px;background:#333"></div>
<div class="a" style="left:994.0px;top:679.5px;width:634.0px;height:17.0px;background:#151515"></div>
<div class="t" style="left:826.0px;width:600px;text-align:center;top:672.0px;font-size:16.5px;color:#f0f0f0;font-weight:normal;transform:scaleX(0.93);">White</div>
<div class="t" style="left:899.0px;width:600px;text-align:center;top:672.0px;font-size:16.5px;color:#f0f0f0;font-weight:normal;transform:scaleX(0.93);">Red</div>
<div class="t" style="left:972.0px;width:600px;text-align:center;top:672.0px;font-size:16.5px;color:#f0f0f0;font-weight:normal;transform:scaleX(0.93);">Green</div>
<div class="t" style="left:1045.0px;width:600px;text-align:center;top:672.0px;font-size:16.5px;color:#f0f0f0;font-weight:normal;transform:scaleX(0.93);">Blue</div>
<div class="t" style="left:1118.0px;width:600px;text-align:center;top:672.0px;font-size:16.5px;color:#f0f0f0;font-weight:normal;transform:scaleX(0.93);">Cyan</div>
<div class="t" style="left:1193.0px;width:600px;text-align:center;top:672.0px;font-size:16.5px;color:#f0f0f0;font-weight:normal;transform:scaleX(0.93);">Magenta</div>
<div class="t" style="left:1267.0px;width:600px;text-align:center;top:672.0px;font-size:16.5px;color:#f0f0f0;font-weight:normal;transform:scaleX(0.93);">Yellow</div>
<div class="a" style="left:1600px;top:662px;width:27.5px;height:34px;overflow:hidden"><div class="t" style="left:24.3px;top:10.0px;font-size:16.5px;color:#f0f0f0;font-weight:normal;transform:scaleX(0.93);transform-origin:0 0;">100W</div></div>
<div class="a" style="left:994px;top:662.5px;width:633.5px;height:203.5px;overflow:hidden">
<div class="a" style="left:0.0px;top:33.5px;width:634.0px;height:30.8px;background:#444444"></div>
<div class="t" style="left:13.5px;top:41.0px;font-size:18px;color:#f4f4f4;font-weight:bold;transform:scaleX(0.88);transform-origin:0 0;">x: CIE31</div>
<div class="t" style="left:98.0px;top:41.0px;font-size:18px;color:#f4f4f4;font-weight:normal;transform:scaleX(0.91);transform-origin:0 0;">0,2818</div>
<div class="t" style="left:175.0px;top:41.0px;font-size:18px;color:#f4f4f4;font-weight:normal;transform:scaleX(0.91);transform-origin:0 0;">0,6222</div>
<div class="t" style="left:244.5px;top:41.0px;font-size:18px;color:#f4f4f4;font-weight:normal;transform:scaleX(0.91);transform-origin:0 0;">0,3295</div>
<div class="t" style="left:321.0px;top:41.0px;font-size:18px;color:#f4f4f4;font-weight:normal;transform:scaleX(0.91);transform-origin:0 0;">0,1518</div>
<div class="t" style="left:390.5px;top:41.0px;font-size:18px;color:#f4f4f4;font-weight:normal;transform:scaleX(0.91);transform-origin:0 0;">0,2220</div>
<div class="t" style="left:468.0px;top:41.0px;font-size:18px;color:#f4f4f4;font-weight:normal;transform:scaleX(0.91);transform-origin:0 0;">0,2557</div>
<div class="t" style="left:539.5px;top:41.0px;font-size:18px;color:#f4f4f4;font-weight:normal;transform:scaleX(0.91);transform-origin:0 0;">0,4061</div>
<div class="t" style="left:617.0px;top:41.0px;font-size:18px;color:#f4f4f4;font-weight:normal;transform:scaleX(0.91);transform-origin:0 0;">0,2818</div>
<div class="a" style="left:0.0px;top:64.3px;width:634.0px;height:30.8px;background:#858585"></div>
<div class="t" style="left:13.5px;top:71.8px;font-size:18px;color:#f4f4f4;font-weight:bold;transform:scaleX(0.88);transform-origin:0 0;">y: CIE31</div>
<div class="t" style="left:98.0px;top:71.8px;font-size:18px;color:#f4f4f4;font-weight:normal;transform:scaleX(0.91);transform-origin:0 0;">0,3031</div>
<div class="t" style="left:175.0px;top:71.8px;font-size:18px;color:#f4f4f4;font-weight:normal;transform:scaleX(0.91);transform-origin:0 0;">0,3518</div>
<div class="t" style="left:244.5px;top:71.8px;font-size:18px;color:#f4f4f4;font-weight:normal;transform:scaleX(0.91);transform-origin:0 0;">0,6081</div>
<div class="t" style="left:321.0px;top:71.8px;font-size:18px;color:#f4f4f4;font-weight:normal;transform:scaleX(0.91);transform-origin:0 0;">0,0751</div>
<div class="t" style="left:390.5px;top:71.8px;font-size:18px;color:#f4f4f4;font-weight:normal;transform:scaleX(0.91);transform-origin:0 0;">0,2864</div>
<div class="t" style="left:468.0px;top:71.8px;font-size:18px;color:#f4f4f4;font-weight:normal;transform:scaleX(0.91);transform-origin:0 0;">0,1357</div>
<div class="t" style="left:539.5px;top:71.8px;font-size:18px;color:#f4f4f4;font-weight:normal;transform:scaleX(0.91);transform-origin:0 0;">0,5432</div>
<div class="t" style="left:617.0px;top:71.8px;font-size:18px;color:#f4f4f4;font-weight:normal;transform:scaleX(0.91);transform-origin:0 0;">0,3031</div>
<div class="a" style="left:0.0px;top:95.1px;width:634.0px;height:30.8px;background:#444444"></div>
<div class="t" style="left:13.5px;top:102.6px;font-size:18px;color:#f4f4f4;font-weight:bold;transform:scaleX(0.88);transform-origin:0 0;">Y</div>
<div class="t" style="left:98.0px;top:102.6px;font-size:18px;color:#f4f4f4;font-weight:normal;transform:scaleX(0.91);transform-origin:0 0;">153,8573</div>
<div class="t" style="left:175.0px;top:102.6px;font-size:18px;color:#f4f4f4;font-weight:normal;transform:scaleX(0.91);transform-origin:0 0;">26,9629</div>
<div class="t" style="left:244.5px;top:102.6px;font-size:18px;color:#f4f4f4;font-weight:normal;transform:scaleX(0.91);transform-origin:0 0;">114,3202</div>
<div class="t" style="left:321.0px;top:102.6px;font-size:18px;color:#f4f4f4;font-weight:normal;transform:scaleX(0.91);transform-origin:0 0;">19,7709</div>
<div class="t" style="left:390.5px;top:102.6px;font-size:18px;color:#f4f4f4;font-weight:normal;transform:scaleX(0.91);transform-origin:0 0;">129,2095</div>
<div class="t" style="left:468.0px;top:102.6px;font-size:18px;color:#f4f4f4;font-weight:normal;transform:scaleX(0.91);transform-origin:0 0;">44,9642</div>
<div class="t" style="left:539.5px;top:102.6px;font-size:18px;color:#f4f4f4;font-weight:normal;transform:scaleX(0.91);transform-origin:0 0;">139,3669</div>
<div class="t" style="left:617.0px;top:102.6px;font-size:18px;color:#f4f4f4;font-weight:normal;transform:scaleX(0.91);transform-origin:0 0;">274,1400</div>
<div class="a" style="left:0.0px;top:125.9px;width:634.0px;height:30.8px;background:#858585"></div>
<div class="t" style="left:13.5px;top:133.4px;font-size:18px;color:#f4f4f4;font-weight:bold;transform:scaleX(0.88);transform-origin:0 0;">Target Y</div>
<div class="t" style="left:98.0px;top:133.4px;font-size:18px;color:#f4f4f4;font-weight:normal;transform:scaleX(0.91);transform-origin:0 0;">142,8282</div>
<div class="t" style="left:175.0px;top:133.4px;font-size:18px;color:#f4f4f4;font-weight:normal;transform:scaleX(0.91);transform-origin:0 0;">30,3733</div>
<div class="t" style="left:244.5px;top:133.4px;font-size:18px;color:#f4f4f4;font-weight:normal;transform:scaleX(0.91);transform-origin:0 0;">102,1448</div>
<div class="t" style="left:321.0px;top:133.4px;font-size:18px;color:#f4f4f4;font-weight:normal;transform:scaleX(0.91);transform-origin:0 0;">10,3101</div>
<div class="t" style="left:390.5px;top:133.4px;font-size:18px;color:#f4f4f4;font-weight:normal;transform:scaleX(0.91);transform-origin:0 0;">112,4549</div>
<div class="t" style="left:468.0px;top:133.4px;font-size:18px;color:#f4f4f4;font-weight:normal;transform:scaleX(0.91);transform-origin:0 0;">40,6834</div>
<div class="t" style="left:539.5px;top:133.4px;font-size:18px;color:#f4f4f4;font-weight:normal;transform:scaleX(0.91);transform-origin:0 0;">132,5181</div>
<div class="t" style="left:617.0px;top:133.4px;font-size:18px;color:#f4f4f4;font-weight:normal;transform:scaleX(0.91);transform-origin:0 0;">274,1400</div>
<div class="a" style="left:0.0px;top:156.7px;width:634.0px;height:30.8px;background:#444444"></div>
<div class="t" style="left:13.5px;top:164.2px;font-size:18px;color:#f4f4f4;font-weight:bold;transform:scaleX(0.88);transform-origin:0 0;">ΔE 2000</div>
<div class="t" style="left:98.0px;top:164.2px;font-size:18px;color:#f4f4f4;font-weight:normal;transform:scaleX(0.91);transform-origin:0 0;">10,6900</div>
<div class="t" style="left:175.0px;top:164.2px;font-size:18px;color:#f4f4f4;font-weight:normal;transform:scaleX(0.91);transform-origin:0 0;">5,0383</div>
<div class="t" style="left:244.5px;top:164.2px;font-size:18px;color:#f4f4f4;font-weight:normal;transform:scaleX(0.91);transform-origin:0 0;">5,4528</div>
<div class="t" style="left:321.0px;top:164.2px;font-size:18px;color:#f4f4f4;font-weight:normal;transform:scaleX(0.91);transform-origin:0 0;">8,0133</div>
<div class="t" style="left:390.5px;top:164.2px;font-size:18px;color:#f4f4f4;font-weight:normal;transform:scaleX(0.91);transform-origin:0 0;">11,5798</div>
<div class="t" style="left:468.0px;top:164.2px;font-size:18px;color:#f4f4f4;font-weight:normal;transform:scaleX(0.91);transform-origin:0 0;">7,8138</div>
<div class="t" style="left:539.5px;top:164.2px;font-size:18px;color:#f4f4f4;font-weight:normal;transform:scaleX(0.91);transform-origin:0 0;">5,7071</div>
<div class="t" style="left:617.0px;top:164.2px;font-size:18px;color:#f4f4f4;font-weight:normal;transform:scaleX(0.91);transform-origin:0 0;">11,2000</div>
<div class="a" style="left:0.0px;top:187.5px;width:634.0px;height:30.8px;background:#858585"></div>
<div class="t" style="left:13.5px;top:195.0px;font-size:18px;color:#f4f4f4;font-weight:bold;transform:scaleX(0.88);transform-origin:0 0;">ΔE ITP</div>
<div class="t" style="left:98.0px;top:195.0px;font-size:18px;color:#f4f4f4;font-weight:normal;transform:scaleX(0.91);transform-origin:0 0;">10,1613</div>
<div class="t" style="left:175.0px;top:195.0px;font-size:18px;color:#f4f4f4;font-weight:normal;transform:scaleX(0.91);transform-origin:0 0;">28,9910</div>
<div class="t" style="left:244.5px;top:195.0px;font-size:18px;color:#f4f4f4;font-weight:normal;transform:scaleX(0.91);transform-origin:0 0;">10,9871</div>
<div class="t" style="left:321.0px;top:195.0px;font-size:18px;color:#f4f4f4;font-weight:normal;transform:scaleX(0.91);transform-origin:0 0;">36,1075</div>
<div class="t" style="left:390.5px;top:195.0px;font-size:18px;color:#f4f4f4;font-weight:normal;transform:scaleX(0.91);transform-origin:0 0;">18,2802</div>
<div class="t" style="left:468.0px;top:195.0px;font-size:18px;color:#f4f4f4;font-weight:normal;transform:scaleX(0.91);transform-origin:0 0;">62,3200</div>
<div class="t" style="left:539.5px;top:195.0px;font-size:18px;color:#f4f4f4;font-weight:normal;transform:scaleX(0.91);transform-origin:0 0;">21,0372</div>
<div class="t" style="left:617.0px;top:195.0px;font-size:18px;color:#f4f4f4;font-weight:normal;transform:scaleX(0.91);transform-origin:0 0;">17,0000</div>
</div>
<div class="a" style="left:1628.0px;top:696.0px;width:17.0px;height:170.0px;background:#5a5a5a"></div>
<div class="a" style="left:1630.0px;top:698.0px;width:13.0px;height:15.5px;background:#7a7a7a;border-radius:3px;border:1px solid #8a8a8a"></div>
<div class="a" style="left:1630.0px;top:718.0px;width:13.0px;height:106.0px;background:#444;border-radius:7px"></div>
<div class="a" style="left:1630.0px;top:848.5px;width:13.0px;height:15.5px;background:#7a7a7a;border-radius:3px;border:1px solid #8a8a8a"></div>
<div class="a" style="left:994.0px;top:866.0px;width:634.0px;height:19.0px;background:linear-gradient(#3e3e3e,#555 50%,#6a6a6a)"></div>
<div class="a" style="left:996.0px;top:868.0px;width:14.0px;height:16.0px;background:#7a7a7a;border-radius:3px;border:1px solid #8a8a8a"></div>
<div class="a" style="left:1014.0px;top:868.0px;width:546.0px;height:16.0px;background:#3c3c3c;border-radius:8px"></div>
<div class="a" style="left:1612.0px;top:868.0px;width:14.0px;height:16.0px;background:#7a7a7a;border-radius:3px;border:1px solid #8a8a8a"></div>
<div class="a" style="left:1628.0px;top:866.0px;width:17.0px;height:19.0px;background:#2e2e2e"></div>
<svg class="s"><polygon points="1631.5,709 1641.5,709 1636.5,703.5" fill="#3a3a3a"/><polygon points="1631.5,853 1641.5,853 1636.5,858.5" fill="#3a3a3a"/><polygon points="1614.5,870 1614.5,881 1621,875.5" fill="#3a3a3a"/><polygon points="1009,870 1009,881 1002.5,875.5" fill="#3a3a3a"/></svg>
<div class="a" style="left:-0.5px;top:929.5px;width:155.5px;height:75.0px;background:linear-gradient(#b0b0b0,#9a9a9a 20%,#7c7c7c 60%,#5e5e5e);border-radius:6px"></div>
<div class="a" style="left:5.5px;top:935.8px;width:143.5px;height:45.0px;background:#c0c0c0;border-radius:5px;box-shadow:inset 1.5px 1.5px 1px rgba(0,0,0,0.25),0 0 0 1px rgba(0,0,0,0.12)"></div>
<div class="t" style="left:-223.0px;width:600px;text-align:center;top:989.7px;font-size:12.5px;color:#2a2a2a;font-weight:bold;">White</div>
<div class="a" style="left:157.3px;top:929.5px;width:155.5px;height:75.0px;background:linear-gradient(#b0b0b0,#9a9a9a 20%,#7c7c7c 60%,#5e5e5e);border-radius:6px"></div>
<div class="a" style="left:163.3px;top:935.8px;width:143.5px;height:45.0px;background:#bf0000;border-radius:5px;box-shadow:inset 1.5px 1.5px 1px rgba(0,0,0,0.25),0 0 0 1px rgba(0,0,0,0.12)"></div>
<div class="t" style="left:-65.2px;width:600px;text-align:center;top:989.7px;font-size:12.5px;color:#2a2a2a;font-weight:bold;">Red</div>
<div class="a" style="left:315.1px;top:929.5px;width:155.5px;height:75.0px;background:linear-gradient(#b0b0b0,#9a9a9a 20%,#7c7c7c 60%,#5e5e5e);border-radius:6px"></div>
<div class="a" style="left:321.1px;top:935.8px;width:143.5px;height:45.0px;background:#00c000;border-radius:5px;box-shadow:inset 1.5px 1.5px 1px rgba(0,0,0,0.25),0 0 0 1px rgba(0,0,0,0.12)"></div>
<div class="t" style="left:92.6px;width:600px;text-align:center;top:989.7px;font-size:12.5px;color:#2a2a2a;font-weight:bold;">Green</div>
<div class="a" style="left:472.9px;top:929.5px;width:155.5px;height:75.0px;background:linear-gradient(#b0b0b0,#9a9a9a 20%,#7c7c7c 60%,#5e5e5e);border-radius:6px"></div>
<div class="a" style="left:478.9px;top:935.8px;width:143.5px;height:45.0px;background:#0000c0;border-radius:5px;box-shadow:inset 1.5px 1.5px 1px rgba(0,0,0,0.25),0 0 0 1px rgba(0,0,0,0.12)"></div>
<div class="t" style="left:250.4px;width:600px;text-align:center;top:989.7px;font-size:12.5px;color:#2a2a2a;font-weight:bold;">Blue</div>
<div class="a" style="left:630.7px;top:929.5px;width:155.5px;height:75.0px;background:linear-gradient(#b0b0b0,#9a9a9a 20%,#7c7c7c 60%,#5e5e5e);border-radius:6px"></div>
<div class="a" style="left:636.7px;top:935.8px;width:143.5px;height:45.0px;background:#00c0c0;border-radius:5px;box-shadow:inset 1.5px 1.5px 1px rgba(0,0,0,0.25),0 0 0 1px rgba(0,0,0,0.12)"></div>
<div class="t" style="left:408.2px;width:600px;text-align:center;top:989.7px;font-size:12.5px;color:#2a2a2a;font-weight:bold;">Cyan</div>
<div class="a" style="left:788.5px;top:929.5px;width:155.5px;height:75.0px;background:linear-gradient(#b0b0b0,#9a9a9a 20%,#7c7c7c 60%,#5e5e5e);border-radius:6px"></div>
<div class="a" style="left:794.5px;top:935.8px;width:143.5px;height:45.0px;background:#c000c0;border-radius:5px;box-shadow:inset 1.5px 1.5px 1px rgba(0,0,0,0.25),0 0 0 1px rgba(0,0,0,0.12)"></div>
<div class="t" style="left:566.0px;width:600px;text-align:center;top:989.7px;font-size:12.5px;color:#2a2a2a;font-weight:bold;">Magenta</div>
<div class="a" style="left:946.3px;top:929.5px;width:155.5px;height:75.0px;background:linear-gradient(#b0b0b0,#9a9a9a 20%,#7c7c7c 60%,#5e5e5e);border-radius:6px"></div>
<div class="a" style="left:952.3px;top:935.8px;width:143.5px;height:45.0px;background:#c0c000;border-radius:5px;box-shadow:inset 1.5px 1.5px 1px rgba(0,0,0,0.25),0 0 0 1px rgba(0,0,0,0.12)"></div>
<div class="t" style="left:723.8px;width:600px;text-align:center;top:989.7px;font-size:12.5px;color:#2a2a2a;font-weight:bold;">Yellow</div>
<div class="a" style="left:1105.0px;top:930.0px;width:155.0px;height:75.0px;background:linear-gradient(#202020,#2a2a2a 40%,#303030);border-radius:6px"></div>
<div class="a" style="left:1111.5px;top:936.0px;width:143.0px;height:45.0px;background:#fff;border-radius:5px;box-shadow:inset 1.5px 1.5px 1px rgba(0,0,0,0.3)"></div>
<div class="t" style="left:883.0px;width:600px;text-align:center;top:989.4px;font-size:12.5px;color:#ffffff;font-weight:bold;">100W</div>
<div class="a" style="left:1264.5px;top:929.0px;width:60.0px;height:80.0px;background:linear-gradient(#9a9a9a,#7a7a7a 30%,#8a8a8a 31%,#6a6a6a);border-radius:6px 6px 0 0"></div>
<div class="a" style="left:1264.5px;top:951.0px;width:60.0px;height:1.8px;background:#3a3a3a"></div>
<div class="a" style="left:1285.0px;top:931.5px;width:20.0px;height:20.0px;border-radius:50%;background:linear-gradient(#6a6a6a,#8a8a8a 70%,#9a9a9a)"></div>
<svg class="s"><polygon points="1289.5,944.5 1300,944.5 1294.7,938.5" fill="#2c2c2c"/></svg>
<div class="a" style="left:1274.5px;top:960.0px;width:39.0px;height:38.0px;background:#222;border-radius:6px"></div>
<div class="a" style="left:1277.5px;top:963.0px;width:33.0px;height:32.0px;background:linear-gradient(#b0b0b0,#8a8a8a);border-radius:4px"></div>
<div class="a" style="left:1286.0px;top:971.0px;width:17.5px;height:17.5px;background:linear-gradient(#2a2a2a 50%,#000 50%)"></div>
<div class="a" style="left:1325.0px;top:929.0px;width:58.5px;height:38.0px;background:linear-gradient(#acacac,#8e8e8e 50%,#6e6e6e);"></div>
<div class="a" style="left:1384.5px;top:929.0px;width:55.0px;height:38.0px;background:linear-gradient(#acacac,#8e8e8e 50%,#6e6e6e);"></div>
<div class="a" style="left:1440.5px;top:929.0px;width:55.5px;height:38.0px;background:linear-gradient(#acacac,#8e8e8e 50%,#6e6e6e);"></div>
<div class="a" style="left:1497.0px;top:929.0px;width:55.5px;height:38.0px;background:linear-gradient(#acacac,#8e8e8e 50%,#6e6e6e);"></div>
<div class="a" style="left:1553.5px;top:929.0px;width:54.5px;height:38.0px;background:linear-gradient(#acacac,#8e8e8e 50%,#6e6e6e);"></div>
<div class="a" style="left:1325.0px;top:968.0px;width:171.0px;height:38.0px;background:linear-gradient(#acacac,#8e8e8e 50%,#6e6e6e);"></div>
<div class="a" style="left:1497.0px;top:968.0px;width:167.0px;height:38.0px;background:linear-gradient(#acacac,#8e8e8e 50%,#6e6e6e);"></div>
<div class="a" style="left:1342.3px;top:936.3px;width:24.0px;height:24.0px;border-radius:50%;background:linear-gradient(#7c7c7c,#9a9a9a 70%,#a6a6a6)"></div>
<div class="a" style="left:1400.0px;top:936.3px;width:24.0px;height:24.0px;border-radius:50%;background:linear-gradient(#7c7c7c,#9a9a9a 70%,#a6a6a6)"></div>
<div class="a" style="left:1456.0px;top:936.3px;width:24.0px;height:24.0px;border-radius:50%;background:linear-gradient(#7c7c7c,#9a9a9a 70%,#a6a6a6)"></div>
<div class="a" style="left:1512.2px;top:936.3px;width:24.0px;height:24.0px;border-radius:50%;background:linear-gradient(#7c7c7c,#9a9a9a 70%,#a6a6a6)"></div>
<div class="a" style="left:1568.4px;top:936.3px;width:24.0px;height:24.0px;border-radius:50%;background:linear-gradient(#7c7c7c,#9a9a9a 70%,#a6a6a6)"></div>
<div class="a" style="left:1352.0px;top:974.5px;width:24.0px;height:24.0px;border-radius:50%;background:linear-gradient(#7c7c7c,#9a9a9a 70%,#a6a6a6)"></div>
<div class="a" style="left:1618.3px;top:975.0px;width:24.0px;height:24.0px;border-radius:50%;background:linear-gradient(#7c7c7c,#9a9a9a 70%,#a6a6a6)"></div>
<svg class="s"><rect x="1349.2" y="943" width="10.2" height="10" fill="#2a2a2a"/><polygon points="1408.3,942.5 1408.3,955 1418,948.7" fill="#2a2a2a"/><path d="M1463.5,942.5 h-2 v12 h2 M1472.5,942.5 h2 v12 h-2" stroke="#2a2a2a" stroke-width="1.8" fill="none"/><rect x="1465.8" y="947.6" width="1.6" height="1.6" fill="#2a2a2a"/><rect x="1468.6" y="947.6" width="1.6" height="1.6" fill="#2a2a2a"/><path d="M1524.2,948.3 C1521,944.5 1516.5,945 1516.5,948.3 C1516.5,951.6 1521,952.1 1524.2,948.3 C1527.4,944.5 1531.9,945 1531.9,948.3 C1531.9,951.6 1527.4,952.1 1524.2,948.3 Z" stroke="#2a2a2a" stroke-width="1.8" fill="none"/><path d="M1575,947 A6,6 0 0 1 1585.5,945.5 M1585.8,950 A6,6 0 0 1 1575.3,951.5" stroke="#2a2a2a" stroke-width="2.2" fill="none"/><polygon points="1587,940.5 1587.5,947 1582,946" fill="#2a2a2a"/><polygon points="1574,956 1573.5,949.5 1579,950.5" fill="#2a2a2a"/><path d="M1366,981.5 l-4.5,5 l4.5,5 M1370.5,981.5 l-4.5,5 l4.5,5" stroke="#2a2a2a" stroke-width="1.8" fill="none"/><path d="M1625.5,982 l4.5,5 l-4.5,5 M1630,982 l4.5,5 l-4.5,5" stroke="#2a2a2a" stroke-width="1.8" fill="none"/><g style="filter:drop-shadow(1px 1.5px 1.2px rgba(0,0,0,0.7))"><line x1="1635.3" y1="932.8" x2="1635.3" y2="960.0" stroke="#e20808" stroke-width="6.8" stroke-linecap="round" transform="rotate(0 1635.3 946.4)"/><line x1="1635.3" y1="932.8" x2="1635.3" y2="960.0" stroke="#e20808" stroke-width="6.8" stroke-linecap="round" transform="rotate(60 1635.3 946.4)"/><line x1="1635.3" y1="932.8" x2="1635.3" y2="960.0" stroke="#e20808" stroke-width="6.8" stroke-linecap="round" transform="rotate(120 1635.3 946.4)"/></g></svg>
<div class="t" style="left:1397.0px;top:974.0px;font-size:27px;color:#2e2e2e;font-weight:normal;transform:scaleX(1.04);transform-origin:0 0;-webkit-text-stroke:0.6px #2e2e2e;">Back</div>
<div class="t" style="left:1531.0px;top:974.0px;font-size:27px;color:#2e2e2e;font-weight:normal;transform:scaleX(1.15);transform-origin:0 0;-webkit-text-stroke:0.6px #2e2e2e;">Next</div>
<div class="a" style="left:1662.0px;top:38.0px;width:5.0px;height:968.0px;background:linear-gradient(90deg,rgba(0,0,0,0),rgba(0,0,0,0.45))"></div>
<script>
(function(){
var loc=[[0.1741,0.0050],[0.1740,0.0050],[0.1738,0.0049],[0.1736,0.0049],[0.1733,0.0048],[0.1730,0.0048],[0.1726,0.0048],[0.1721,0.0048],[0.1714,0.0051],[0.1703,0.0058],[0.1689,0.0069],[0.1669,0.0086],[0.1644,0.0109],[0.1611,0.0138],[0.1566,0.0177],[0.1510,0.0227],[0.1440,0.0297],[0.1355,0.0399],[0.1241,0.0578],[0.1096,0.0868],[0.0913,0.1327],[0.0687,0.2007],[0.0454,0.2950],[0.0235,0.4127],[0.0082,0.5384],[0.0039,0.6548],[0.0139,0.7502],[0.0389,0.8120],[0.0743,0.8338],[0.1142,0.8262],[0.1547,0.8059],[0.1929,0.7816],[0.2296,0.7543],[0.2658,0.7243],[0.3016,0.6923],[0.3373,0.6589],[0.3731,0.6245],[0.4087,0.5896],[0.4441,0.5547],[0.4788,0.5202],[0.5125,0.4866],[0.5448,0.4544],[0.5752,0.4242],[0.6029,0.3965],[0.6270,0.3725],[0.6482,0.3514],[0.6658,0.3340],[0.6801,0.3197],[0.6915,0.3083],[0.7006,0.2993],[0.7079,0.2920],[0.7140,0.2859],[0.7190,0.2809],[0.7230,0.2770],[0.7260,0.2740],[0.7320,0.2680],[0.7347,0.2653]];
var Mi=[[3.2404542,-1.5371385,-0.4985314],[-0.9692660,1.8760108,0.0415560],[0.0556434,-0.2040259,1.0572252]];
var DARK=0.6;
function col(x,y,o){
  var X=x/y, Z=(1-x-y)/y;
  var r=Mi[0][0]*X+Mi[0][1]+Mi[0][2]*Z;
  var g=Mi[1][0]*X+Mi[1][1]+Mi[1][2]*Z;
  var b=Mi[2][0]*X+Mi[2][1]+Mi[2][2]*Z;
  var k=1;
  if(r<0||g<0||b<0){k=DARK; if(r<0)r=0; if(g<0)g=0; if(b<0)b=0;}
  var m=Math.max(r,g,b); if(m<=0){o[0]+=0;o[1]+=0;o[2]+=0;return;}
  k=k*255/m; o[0]+=r*k; o[1]+=g*k; o[2]+=b*k;
}
function spline(pts,n){
  var out=[];
  for(var i=0;i<pts.length-1;i++){
    var p0=pts[Math.max(i-1,0)],p1=pts[i],p2=pts[i+1],p3=pts[Math.min(i+2,pts.length-1)];
    for(var t=0;t<n;t++){var s=t/n,s2=s*s,s3=s2*s;
      out.push([0.5*((2*p1[0])+(-p0[0]+p2[0])*s+(2*p0[0]-5*p1[0]+4*p2[0]-p3[0])*s2+(-p0[0]+3*p1[0]-3*p2[0]+p3[0])*s3),
                0.5*((2*p1[1])+(-p0[1]+p2[1])*s+(2*p0[1]-5*p1[1]+4*p2[1]-p3[1])*s2+(-p0[1]+3*p1[1]-3*p2[1]+p3[1])*s3)]);}
  }
  out.push(pts[pts.length-1]); return out;
}
function render(id,toPx,fromPx,bg){
  var c=document.getElementById(id); if(!c||!c.getContext) return;
  var ctx=c.getContext('2d'); var W=c.width,H=c.height;
  var pts=spline(loc.map(function(p){return toPx(p[0],p[1]);}),8);
  ctx.beginPath(); for(var i=0;i<pts.length;i++){ if(i==0)ctx.moveTo(pts[i][0],pts[i][1]); else ctx.lineTo(pts[i][0],pts[i][1]); }
  ctx.closePath(); ctx.fillStyle='#fff'; ctx.fill();
  var img=ctx.getImageData(0,0,W,H), d=img.data, o=[0,0,0];
  for(var j=0;j<H;j++){ for(var i=0;i<W;i++){ var p=(j*W+i)*4; var a=d[p+3]/255; if(a==0){d[p]=bg;d[p+1]=bg;d[p+2]=bg;d[p+3]=255;continue;}
    o[0]=0;o[1]=0;o[2]=0;
    for(var sj=0;sj<2;sj++)for(var si=0;si<2;si++){var xy=fromPx(i+0.25+0.5*si,j+0.25+0.5*sj); col(xy[0],xy[1],o);}
    d[p]=o[0]/4*a+bg*(1-a); d[p+1]=o[1]/4*a+bg*(1-a); d[p+2]=o[2]/4*a+bg*(1-a); d[p+3]=255; }}
  ctx.putImageData(img,0,0);
  if(id=='cie76'){ctx.beginPath(); for(var i=0;i<pts.length;i++){ if(i==0)ctx.moveTo(pts[i][0],pts[i][1]); else ctx.lineTo(pts[i][0],pts[i][1]); } ctx.closePath(); ctx.strokeStyle='rgba(0,0,0,0.35)'; ctx.lineWidth=1; ctx.stroke();}
}
// CIE 1976 canvas at page (1017.5,120.5); data mapping px=1016.5+1065u, py=612-822v
(function(){
  var L=1017.5,T=120.5,U0=1016.9,V0=609.5,SU=1063.5,SV=816.5;
  render('cie76',function(x,y){var d=-2*x+12*y+3,u=4*x/d,v=9*y/d; return [U0+SU*u-L, V0-SV*v-T];},
    function(px,py){var u=(px+L-U0)/SU, v=(V0-(py+T))/SV; var den=6*u-16*v+12; return [9*u/den,4*v/den];}, 0x24);
})();
// CIE 1931 canvas at page (636,678.5); px=805+3985*(x-0.4193), py=775.5-2303*(y-0.5053)
(function(){
  var L=636,T=678.5,SX=3985,SY=2303;
  render('cie31',function(x,y){return [805+SX*(x-0.4193)-L, 775.5-SY*(y-0.5053)-T];},
    function(px,py){return [0.4193+(px+L-805)/SX, 0.5053-(py+T-775.5)/SY];}, 0x24);
})();
})();
</script>
</body></html>
